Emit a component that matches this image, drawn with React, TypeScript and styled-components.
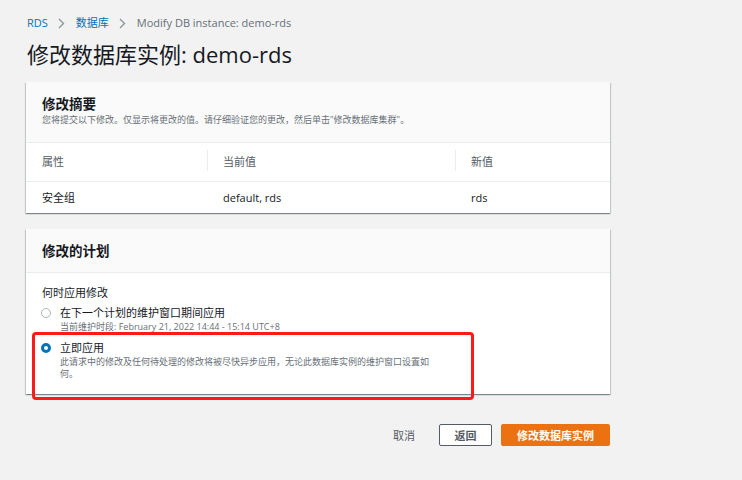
import React from "react";
import styled, { createGlobalStyle } from "styled-components";

const Global = createGlobalStyle`
  html, body { margin: 0; padding: 0; background: #f2f2f2; }
  body { font-family: "Open Sans", "Noto Sans CJK SC", sans-serif; color: #16191f; }
`;

const Page = styled.div`
  width: 742px;
  height: 480px;
  box-sizing: border-box;
  padding: 16px 132px 0 26px;
  background: #f2f2f2;
  font-family: "Open Sans", "Noto Sans CJK SC", sans-serif;
`;

const Breadcrumbs = styled.nav`
  display: flex;
  align-items: center;
  height: 14px;
  padding-left: 1px;
  font-size: 11px;
  line-height: 14px;
`;

const Crumb = styled.span<{ $current?: boolean }>`
  color: ${(p) => (p.$current ? "#687078" : "#0073bb")};
`;

const Chevron = styled.span`
  display: inline-flex;
  width: 28px;
  justify-content: center;
  align-items: center;
  color: #879596;
`;

const Title = styled.h1`
  margin: 9px 0 0 1px;
  font-size: 22px;
  line-height: 30px;
  font-weight: 400;
  color: #16191f;
`;

const Card = styled.section<{ $mt: number }>`
  position: relative;
  background: #fff;
  box-shadow: 0 1px 1px 0 rgba(0, 28, 36, 0.3), 1px 1px 1px 0 rgba(0, 28, 36, 0.15),
    -1px 1px 1px 0 rgba(0, 28, 36, 0.15);
  margin-top: ${(p) => p.$mt}px;
`;

const CardHeader = styled.header<{ $pt: number; $pb: number }>`
  background: #fafafa;
  border-bottom: 1px solid #eaeded;
  padding: ${(p) => p.$pt}px 16px ${(p) => p.$pb}px 16px;
`;

const CardTitle = styled.h2`
  margin: 0;
  font-size: 13.5px;
  line-height: 18px;
  font-weight: 700;
  color: #16191f;
`;

const CardDesc = styled.p`
  margin: 1px 0 0;
  font-size: 9px;
  line-height: 12px;
  color: #687078;
`;

const TableRow = styled.div<{ $h: number; $head?: boolean }>`
  display: grid;
  grid-template-columns: 181px 248px 1fr;
  height: ${(p) => p.$h}px;
  align-items: center;
  border-bottom: ${(p) => (p.$head ? "1px solid #eaeded" : "none")};
  font-size: 11px;
  color: ${(p) => (p.$head ? "#545b64" : "#16191f")};
`;

const Cell = styled.div<{ $divider?: boolean }>`
  position: relative;
  padding-left: 16px;
  line-height: 14px;
  &::before {
    content: "";
    display: ${(p) => (p.$divider ? "block" : "none")};
    position: absolute;
    left: 0;
    top: -5px;
    height: 21px;
    border-left: 1px solid #eaeded;
  }
`;

const CardBody = styled.div`
  padding: 13px 16px 14px;
`;

const FieldLabel = styled.div`
  font-size: 11px;
  line-height: 14px;
  color: #16191f;
  margin-bottom: 6px;
`;

const Option = styled.div<{ $mt?: number }>`
  display: grid;
  grid-template-columns: 14px 1fr;
  column-gap: 4px;
  margin-top: ${(p) => p.$mt ?? 0}px;
`;

const Radio = styled.span<{ $checked?: boolean }>`
  box-sizing: border-box;
  width: 10px;
  height: 10px;
  margin-top: 2px;
  margin-left: -1px;
  border-radius: 50%;
  background: #fff;
  border: ${(p) => (p.$checked ? "3px solid #0073bb" : "1px solid #aab7b8")};
`;

const OptionLabel = styled.div`
  font-size: 11px;
  line-height: 14px;
  color: #16191f;
`;

const OptionDesc = styled.div`
  font-size: 9px;
  line-height: 12px;
  color: #687078;
  max-width: 375px;
  margin-top: 1px;
`;

const Highlight = styled.div`
  position: absolute;
  left: 6px;
  top: 103px;
  width: 442px;
  height: 68px;
  box-sizing: border-box;
  border: 3px solid #ff1a1a;
  border-radius: 4px;
  pointer-events: none;
`;

const Actions = styled.div`
  display: flex;
  justify-content: flex-end;
  align-items: center;
  margin-top: 30px;
  gap: 9px;
`;

const Button = styled.button<{ $variant: "link" | "normal" | "primary" }>`
  box-sizing: border-box;
  height: 22px;
  font-family: "Open Sans", "Noto Sans CJK SC", sans-serif;
  font-size: 11px;
  font-weight: ${(p) => (p.$variant === "link" ? 400 : 700)};
  border-radius: 2px;
  cursor: pointer;
  padding: 0;
  width: ${(p) => (p.$variant === "link" ? "auto" : p.$variant === "normal" ? "53px" : "109px")};
  margin-right: ${(p) => (p.$variant === "link" ? "15px" : "0")};
  color: ${(p) => (p.$variant === "primary" ? "#fff" : "#545b64")};
  background: ${(p) =>
    p.$variant === "primary" ? "#ec7211" : p.$variant === "normal" ? "#fff" : "transparent"};
  border: ${(p) =>
    p.$variant === "primary"
      ? "1px solid #ec7211"
      : p.$variant === "normal"
      ? "1px solid #545b64"
      : "none"};
`;

const ChevronIcon = () => (
  <svg width="7" height="11" viewBox="0 0 7 11" fill="none">
    <path d="M1 1l4.5 4.5L1 10" stroke="currentColor" strokeWidth="1.3" />
  </svg>
);

export default function App() {
  return (
    <>
      <Global />
      <Page>
        <Breadcrumbs>
          <Crumb>RDS</Crumb>
          <Chevron>
            <ChevronIcon />
          </Chevron>
          <Crumb>数据库</Crumb>
          <Chevron>
            <ChevronIcon />
          </Chevron>
          <Crumb $current>Modify DB instance: demo-rds</Crumb>
        </Breadcrumbs>
        <Title>修改数据库实例: demo-rds</Title>

        <Card $mt={13}>
          <CardHeader $pt={13} $pb={16}>
            <CardTitle>修改摘要</CardTitle>
            <CardDesc>
              您将提交以下修改。仅显示将更改的值。请仔细验证您的更改，然后单击"修改数据库集群"。
            </CardDesc>
          </CardHeader>
          <TableRow $h={38} $head>
            <Cell>属性</Cell>
            <Cell $divider>当前值</Cell>
            <Cell $divider>新值</Cell>
          </TableRow>
          <TableRow $h={31}>
            <Cell>安全组</Cell>
            <Cell>default, rds</Cell>
            <Cell>rds</Cell>
          </TableRow>
        </Card>

        <Card $mt={16}>
          <CardHeader $pt={13} $pb={12}>
            <CardTitle>修改的计划</CardTitle>
          </CardHeader>
          <CardBody>
            <FieldLabel>何时应用修改</FieldLabel>
            <Option>
              <Radio />
              <div>
                <OptionLabel>在下一个计划的维护窗口期间应用</OptionLabel>
                <OptionDesc>当前维护时段: February 21, 2022 14:44 - 15:14 UTC+8</OptionDesc>
              </div>
            </Option>
            <Option $mt={8}>
              <Radio $checked />
              <div>
                <OptionLabel>立即应用</OptionLabel>
                <OptionDesc>
                  此请求中的修改及任何待处理的修改将被尽快异步应用，无论此数据库实例的维护窗口设置如何。
                </OptionDesc>
              </div>
            </Option>
          </CardBody>
          <Highlight />
        </Card>

        <Actions>
          <Button $variant="link">取消</Button>
          <Button $variant="normal">返回</Button>
          <Button $variant="primary">修改数据库实例</Button>
        </Actions>
      </Page>
    </>
  );
}
